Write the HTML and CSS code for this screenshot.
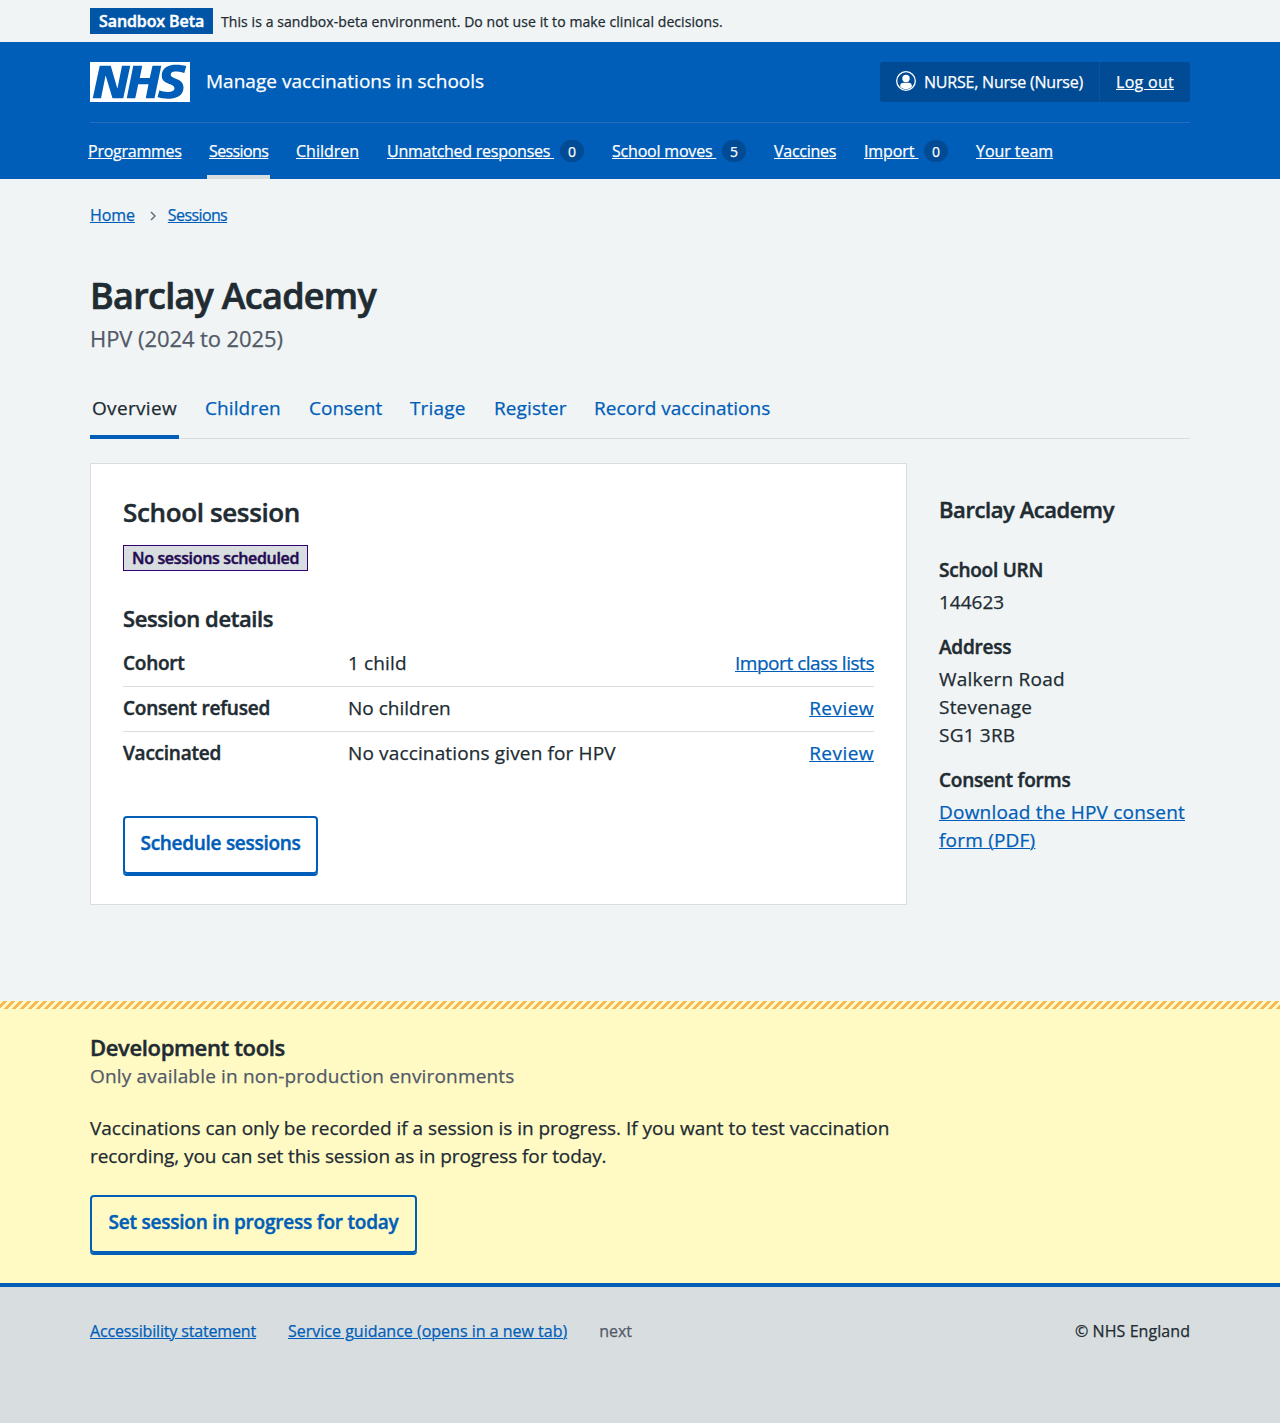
FILE: index.html
```
<!DOCTYPE html>
<html lang="en">
<head>
<meta charset="utf-8">
<title>Barclay Academy – Manage vaccinations in schools</title>
<link rel="stylesheet" href="styles.css">
</head>
<body>
<div class="environment">
  <div class="container environment-inner">
    <strong class="environment-tag">Sandbox Beta</strong>
    <span class="environment-text">This is a sandbox-beta environment. Do not use it to make clinical decisions.</span>
  </div>
</div>

<header class="header">
  <div class="container">
    <div class="header-top">
      <svg class="logo" viewBox="0 0 200 80" width="100" height="40" role="img" aria-label="NHS">
        <path fill="#fff" d="M200 0v80H0V0h200Zm-27.5 5.5c-14.5 0-29 5-29 22 0 10.2 7.7 13.5 14.7 16.3l.7.3c5.4 2 10.1 3.9 10.1 8.4 0 6.5-8.5 7.5-14 7.5s-12.5-1.5-16-3.5L135 70c5.5 2 13.5 3.5 20 3.5 15.5 0 32-4.5 32-22.5 0-19.5-25.5-16.5-25.5-25.5 0-5.5 5.5-6.5 12.500-6.500a35 35 0 0 1 14.500 3l4-13.500c-4.500-2-12-3-20-3Zm-131 2h-22l-14 65H22l9-45h.5l13.500 45h21.500l14-65H64l-9 45h-.5l-13-45Zm63 0h-18l-13 65h17l6-28H117l-5.500 28H129l13.500-65H125L119.500 32h-20l5-24.500Z"/>
      </svg>
      <span class="service-name">Manage vaccinations in schools</span>
      <div class="account">
        <div class="account-user">
          <svg class="account-icon" viewBox="0 0 20 20" width="20" height="20" aria-hidden="true">
            <circle cx="10" cy="10" r="9.3" fill="none" stroke="#fff" stroke-width="1.3"/>
            <circle cx="10" cy="7.4" r="3.7" fill="#fff"/>
            <path fill="#fff" d="M4.2 15.700v-.9c0-1.900 1.300-3 3-3h5.600c1.700 0 3 1.100 3 3v.9c-1.400 1.600-3.500 2.500-5.800 2.500s-4.400-.9-5.800-2.500Z"/>
          </svg>
          <span class="account-name">NURSE, Nurse (Nurse)</span>
        </div>
        <div class="account-exit"><a class="light-link log-out" href="#">Log out</a></div>
      </div>
    </div>
    <nav>
      <ul class="nav">
        <li class="nav-item nav-programmes"><a class="light-link" href="#">Programmes</a></li>
        <li class="nav-item nav-sessions nav-current"><a class="light-link" href="#">Sessions</a></li>
        <li class="nav-item nav-children"><a class="light-link" href="#">Children</a></li>
        <li class="nav-item nav-unmatched"><a class="light-link" href="#">Unmatched responses&nbsp;</a><span class="count">0</span></li>
        <li class="nav-item nav-moves"><a class="light-link" href="#">School moves&nbsp;</a><span class="count">5</span></li>
        <li class="nav-item nav-vaccines"><a class="light-link" href="#">Vaccines</a></li>
        <li class="nav-item nav-import"><a class="light-link" href="#">Import&nbsp;</a><span class="count">0</span></li>
        <li class="nav-item nav-team"><a class="light-link" href="#">Your team</a></li>
      </ul>
    </nav>
  </div>
</header>

<main class="container main">
  <nav class="breadcrumb">
    <a class="link" href="#">Home</a>
    <svg class="chevron" viewBox="0 0 6 10" width="6" height="10" aria-hidden="true"><path d="M1 1l4 4-4 4" fill="none" stroke="#5d6f7e" stroke-width="1.5"/></svg>
    <a class="link breadcrumb-sessions" href="#">Sessions</a>
  </nav>

  <h1 class="title">Barclay Academy</h1>
  <p class="title-caption">HPV (2024 to 2025)</p>

  <nav>
    <ul class="tabs">
      <li class="tab tab-overview tab-current">Overview</li>
      <li class="tab tab-children">Children</li>
      <li class="tab tab-consent">Consent</li>
      <li class="tab tab-triage">Triage</li>
      <li class="tab tab-register">Register</li>
      <li class="tab tab-record">Record vaccinations</li>
    </ul>
  </nav>

  <div class="columns">
    <section class="card">
      <h2 class="card-title">School session</h2>
      <strong class="tag">No sessions scheduled</strong>
      <h3 class="card-subtitle">Session details</h3>
      <dl class="summary">
        <div class="row"><dt>Cohort</dt><dd>1 child</dd><dd class="action"><a class="link import-link" href="#">Import class lists</a></dd></div>
        <div class="row"><dt>Consent refused</dt><dd class="no-children">No children</dd><dd class="action"><a class="link" href="#">Review</a></dd></div>
        <div class="row"><dt>Vaccinated</dt><dd>No vaccinations given for HPV</dd><dd class="action"><a class="link" href="#">Review</a></dd></div>
      </dl>
      <button class="button button-schedule" type="button">Schedule sessions</button>
    </section>

    <aside class="sidebar">
      <h2 class="sidebar-title">Barclay Academy</h2>
      <dl class="details">
        <dt>School URN</dt>
        <dd class="urn">144623</dd>
        <dt>Address</dt>
        <dd>Walkern Road<br>Stevenage<br>SG1 3RB</dd>
        <dt>Consent forms</dt>
        <dd><a class="link" href="#">Download the HPV consent<br>form (PDF)</a></dd>
      </dl>
    </aside>
  </div>
</main>

<section class="dev-tools">
  <div class="container">
    <h2 class="dev-title">Development tools</h2>
    <p class="dev-caption">Only available in non-production environments</p>
    <p class="dev-text">Vaccinations can only be recorded if a session is in progress. If you want to test vaccination<br><span class="dev-text-end">recording, you can set this session as in progress for today.</span></p>
    <button class="button button-progress" type="button">Set session in progress for today</button>
  </div>
</section>

<footer class="footer">
  <div class="container footer-inner">
    <a class="link footer-accessibility" href="#">Accessibility statement</a>
    <a class="link footer-guidance" href="#">Service guidance (opens in a new tab)</a>
    <span class="footer-version">next</span>
    <span class="copyright">© NHS England</span>
  </div>
</footer>
</body>
</html>
```
FILE: styles.css
```
* { box-sizing: border-box; }

body {
  margin: 0;
  min-height: 1423px;
  display: flex;
  flex-direction: column;
  background: #f0f4f5;
  color: #212b32;
  font: 400 19px/28px "Open Sans", "Noto Sans", sans-serif;
  -webkit-text-stroke: .25px;
}

h1, h2, h3, p, ul, dl, dd { margin: 0; padding: 0; }
h1, h2, h3, dt, strong, .button { -webkit-text-stroke: .45px; }
ul { list-style: none; }

.container { width: 1100px; margin: 0 auto; }

.link,
.light-link { color: #005eb8; text-decoration: underline; text-decoration-thickness: 1px; text-underline-offset: 1px; }
.light-link { color: #fff; }

/* Environment banner */
.environment-inner { display: flex; gap: 8px; height: 42px; padding: 8px 0; }
.environment-tag {
  width: 123px;
  height: 26px;
  padding-left: 9px;
  background: #0055a6;
  color: #fff;
  font-size: 16px;
  font-weight: 600;
  line-height: 26px;
  letter-spacing: -.1px;
}
.environment-text { font-size: 14px; line-height: 27px; letter-spacing: .085px; }

/* Header */
.header { height: 137px; background: #005eb8; color: #fff; }
.header-top {
  display: flex;
  height: 81px;
  padding: 20px 0;
  border-bottom: 1px solid #266fbf;
}
.logo { display: block; }
.service-name { margin-left: 16px; line-height: 38px; letter-spacing: .02px; }
.account {
  display: flex;
  width: 310px;
  height: 40px;
  margin-left: auto;
  border-radius: 3px;
  background: #004b93;
  font-size: 16px;
  line-height: 40px;
}
.account-user {
  display: flex;
  gap: 8px;
  width: 220px;
  padding-left: 16px;
  border-right: 1px solid #0056a8;
}
.account-icon { margin-top: 9px; }
.account-name { letter-spacing: -.208px; white-space: nowrap; }
.account-exit { padding-left: 16px; }
.log-out { letter-spacing: .29px; }

.nav {
  display: flex;
  gap: 24px;
  height: 56px;
  margin-left: -4px;
  font-size: 16px;
  line-height: 56px;
  letter-spacing: -.25px;
  white-space: nowrap;
}
.nav-item { display: flex; align-items: center; justify-content: space-between; padding: 0 2px; }
.nav-programmes { width: 97px; }
.nav-sessions { width: 63px; letter-spacing: -.6px; }
.nav-children { width: 67px; letter-spacing: 0; }
.nav-unmatched { width: 201px; letter-spacing: -.25px; }
.nav-moves { width: 138px; letter-spacing: -.2px; }
.nav-vaccines { width: 66px; }
.nav-import { width: 88px; letter-spacing: -.1px; }
.nav-team { width: 81px; letter-spacing: -.05px; }
.nav-current { box-shadow: inset 0 -4px #d8dde0; }
.count {
  width: 24px;
  height: 22px;
  border-radius: 12px;
  background: #004b93;
  font-size: 14px;
  line-height: 23px;
  letter-spacing: 0;
  text-align: center;
}

/* Page heading */
.breadcrumb {
  display: flex;
  align-items: center;
  height: 24px;
  margin-top: 24px;
  font-size: 16px;
  line-height: 24px;
  letter-spacing: -.1px;
}
.breadcrumb-sessions { letter-spacing: -.6px; }
.chevron { margin: 1px 12px 0 15px; }
.title { margin-top: 45px; font-size: 36px; font-weight: 600; line-height: 48px; letter-spacing: -.726px; -webkit-text-stroke: .7px; }
.title-caption { margin-top: 3px; color: #525a68; font-size: 22px; line-height: 30px; letter-spacing: -.078px; }

.tabs {
  display: flex;
  gap: 24px;
  height: 63px;
  margin-top: 23px;
  border-bottom: 1px solid #d8dde0;
  color: #005eb8;
  line-height: 64px;
  white-space: nowrap;
}
.tab { height: 63px; padding: 0 2px; }
.tab-current { border-bottom: 4px solid #005eb8; color: #212b32; letter-spacing: .327px; }
.tab-overview { width: 89px; }
.tab-children { width: 80px; letter-spacing: .1px; }
.tab-consent { width: 77px; }
.tab-triage { width: 60px; letter-spacing: .15px; }
.tab-register { width: 76px; letter-spacing: .1px; }
.tab-record { width: 180px; }

/* Session card */
.columns { display: flex; gap: 32px; margin-top: 24px; }
.card {
  width: 817px;
  height: 442px;
  padding: 32px;
  border: 1px solid #d8dde0;
  background: #fff;
}
.card-title { font-size: 26px; font-weight: 600; line-height: 32px; letter-spacing: -.361px; }
.tag {
  display: block;
  width: 185px;
  height: 26px;
  margin-top: 17px;
  padding-left: 8px;
  border: 1px solid #330072;
  background: #d8dde0;
  color: #240b52;
  font-size: 16px;
  font-weight: 600;
  line-height: 25px;
  letter-spacing: -.346px;
  white-space: nowrap;
}
.card-subtitle { margin-top: 32px; font-size: 22px; font-weight: 600; line-height: 30px; letter-spacing: -.417px; }
.summary { margin-top: 9px; }
.row { display: grid; grid-template-columns: 225px 1fr auto; height: 45px; padding-top: 7px; border-bottom: 1px solid #d8dde0; }
.row:last-child { border-bottom: 0; }
.row dt { font-weight: 600; letter-spacing: -.236px; }
.row dd { letter-spacing: .14px; }
.row .no-children { letter-spacing: 0; }
.row .action { letter-spacing: .46px; }
.row .import-link { letter-spacing: -.467px; }

.button {
  display: block;
  height: 58px;
  padding: 0 0 4px;
  border: 2px solid #005eb8;
  border-radius: 4px;
  box-shadow: 0 2px #005eb8;
  background: transparent;
  color: #005eb8;
  font: 600 19px/50px "Open Sans", "Noto Sans", sans-serif;
  white-space: nowrap;
}
.button-schedule { width: 195px; margin-top: 39px; letter-spacing: -.287px; }
.button-progress { width: 327px; margin-top: 25px; letter-spacing: -.219px; }

/* School details */
.sidebar { width: 251px; padding-top: 31px; white-space: nowrap; }
.sidebar-title { font-size: 22px; font-weight: 600; line-height: 30px; letter-spacing: -.429px; }
.details { padding-top: 32px; }
.details dt { margin-bottom: 4px; font-weight: 600; letter-spacing: -.236px; }
.details dd { margin-bottom: 17px; letter-spacing: .208px; }
.details .urn { letter-spacing: 0; }

/* Development tools */
.dev-tools {
  height: 282px;
  margin-top: 96px;
  padding-top: 32px;
  background:
    repeating-linear-gradient(-45deg, #f7b955 0 2.828px, #fff9c4 2.828px 5.657px) top / 100% 8px no-repeat,
    #fff9c4;
}
.dev-title { margin-bottom: 1px; font-size: 22px; font-weight: 600; line-height: 28px; letter-spacing: -.36px; }
.dev-caption { color: #525a68; letter-spacing: .175px; }
.dev-text { margin-top: 24px; letter-spacing: -.02px; }
.dev-text-end { letter-spacing: -.09px; }

/* Footer */
.footer {
  flex: 1;
  padding-top: 32px;
  border-top: 4px solid #005eb8;
  background: #d8dde0;
  font-size: 16px;
  line-height: 24px;
}
.footer-inner { display: flex; gap: 32px; }
.footer-accessibility { letter-spacing: -.162px; }
.footer-version { color: #525a68; }
.copyright { margin-left: auto; letter-spacing: .064px; }
```
